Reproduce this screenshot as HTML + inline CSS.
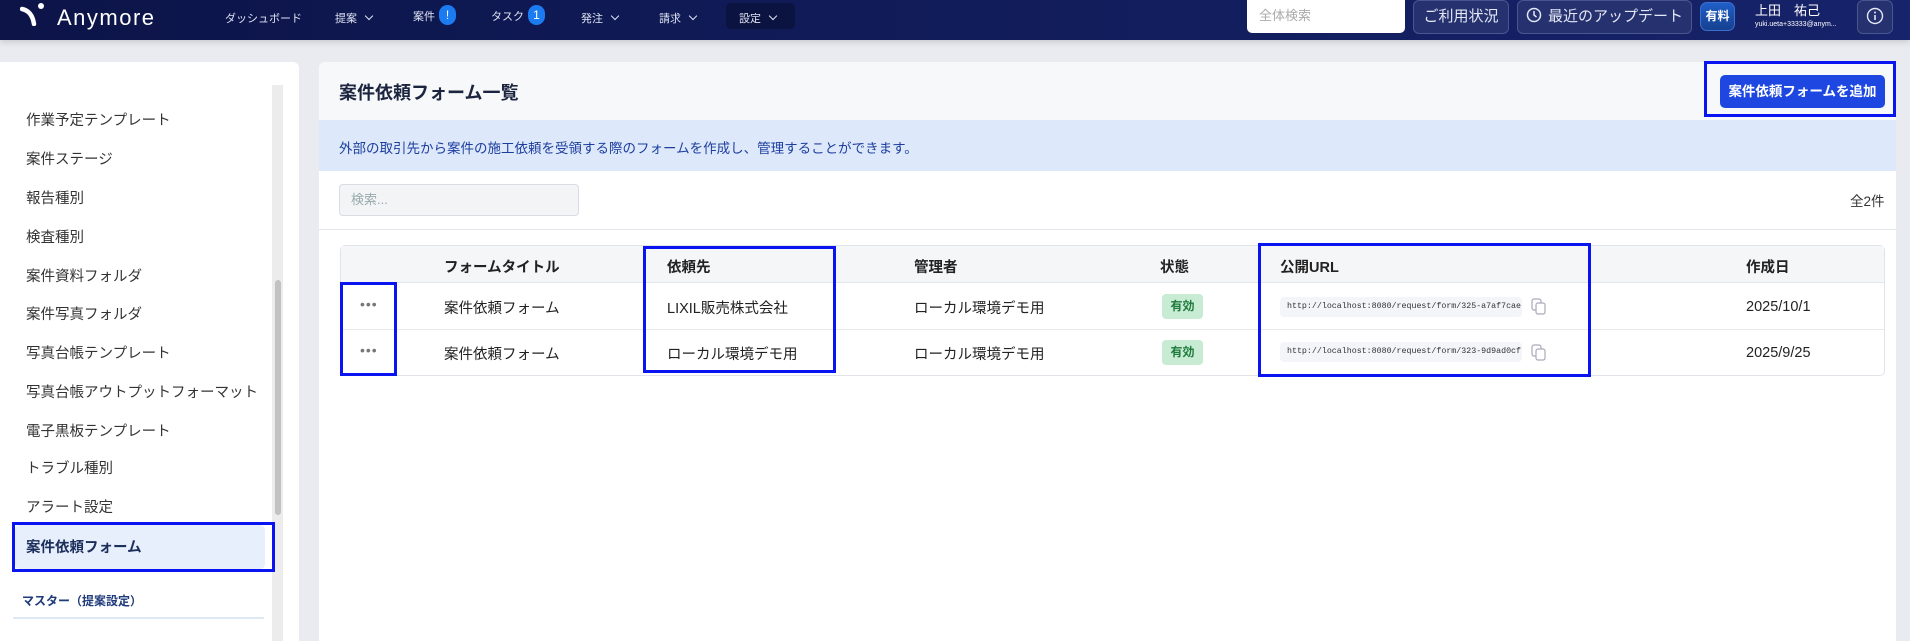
<!DOCTYPE html>
<html><head><meta charset="utf-8"><style>
*{box-sizing:border-box;margin:0;padding:0}
html{width:1910px;height:641px;overflow:hidden}
body{width:1910px;height:641px;overflow:hidden;background:#e9ebf0;font-family:"Liberation Sans","Noto Sans CJK JP",sans-serif;color:#222;position:relative}
.hd{position:absolute;left:0;top:0;width:1910px;height:40px;background:linear-gradient(90deg,#0c1448,#111c5a 50%,#17236a);box-shadow:0 2px 6px rgba(0,0,0,.15)}
.a{position:absolute;white-space:nowrap}
.nav{color:#dfe3f3;font-size:11px;top:10px}
.chev{display:inline-block;width:6px;height:6px;border-right:1.3px solid #dfe3f3;border-bottom:1.3px solid #dfe3f3;transform:rotate(45deg);margin-left:9px;position:relative;top:-3px}
.badge{display:inline-block;width:17px;height:20px;border-radius:10px;background:#1b7bf0;color:#fff;font-size:12px;text-align:center;line-height:20px;margin-left:4px;vertical-align:middle;position:relative;top:-2px}
.hbtn{position:absolute;top:0;height:34px;border:1px solid #4a5690;border-radius:6px;background:#26326f;color:#e4e7f4;font-size:15px;line-height:32px;text-align:center;white-space:nowrap}
.side{position:absolute;left:0;top:62px;width:299px;height:579px;background:#fff;border-radius:0 6px 0 0}
.si{position:absolute;left:26px;font-size:14.5px;color:#333;white-space:nowrap}
.main{position:absolute;left:319px;top:62px;width:1577px;height:579px;background:#fff;border-radius:6px 6px 0 0}
.bl{position:absolute;border:3px solid #0a14f0}
.th{position:absolute;font-size:14.5px;font-weight:bold;color:#222;top:256px;white-space:nowrap}
.td{position:absolute;font-size:14.5px;color:#222;white-space:nowrap}
.pill{position:absolute;left:1280px;width:242px;height:20px;background:#f3f5f8;border-radius:4px;font-family:"Liberation Mono",monospace;font-size:8.3px;color:#333;line-height:20px;padding-left:7px;white-space:nowrap;overflow:hidden}
.ok{position:absolute;left:1162px;width:41px;height:25px;background:#c8ebd3;color:#1e7a3c;font-size:12px;font-weight:bold;border-radius:4px;text-align:center;line-height:25px}
.dots{position:absolute;left:360px;font-size:14px;color:#777;letter-spacing:1px}
</style></head><body>
<div class="hd"></div>
<svg class="a" style="left:20px;top:2px" width="26" height="24" viewBox="0 0 26 24"><path d="M2 7 Q12 9 14 22" stroke="#fff" stroke-width="4.5" fill="none" stroke-linecap="round"/><circle cx="21" cy="4" r="3" fill="#fff"/></svg>
<div class="a" style="left:57px;top:5px;color:#fff;font-size:22px;letter-spacing:1.5px">Anymore</div>
<div class="a nav" style="left:225px">ダッシュボード</div>
<div class="a nav" style="left:335px">提案<span class="chev"></span></div>
<div class="a nav" style="left:413px;top:7px">案件<span class="badge">!</span></div>
<div class="a nav" style="left:491px;top:7px">タスク<span class="badge">1</span></div>
<div class="a nav" style="left:581px">発注<span class="chev"></span></div>
<div class="a nav" style="left:659px">請求<span class="chev"></span></div>
<div class="a" style="left:726px;top:3px;width:69px;height:26px;background:#0b1340;border-radius:5px"></div>
<div class="a nav" style="left:739px">設定<span class="chev"></span></div>
<div class="a" style="left:1247px;top:0;width:158px;height:33px;background:#fff;border-radius:0 0 5px 5px;color:#aaa;font-size:13px;line-height:31px;padding-left:12px">全体検索</div>
<div class="hbtn" style="left:1413px;width:96px">ご利用状況</div>
<div class="hbtn" style="left:1517px;width:175px"><svg width="16" height="16" viewBox="0 0 16 16" style="vertical-align:-2px;margin-right:6px"><circle cx="8" cy="8" r="6.5" stroke="#e4e7f4" stroke-width="1.5" fill="none"/><path d="M8 4v4l2.5 2" stroke="#e4e7f4" stroke-width="1.5" fill="none"/></svg>最近のアップデート</div>
<div class="a" style="left:1700px;top:2px;width:35px;height:29px;background:linear-gradient(#1f5fc8,#16408f);border:1px solid #3c6fd0;border-radius:7px;color:#fff;font-size:12px;font-weight:bold;text-align:center;line-height:27px">有料</div>
<div class="a" style="left:1755px;top:0;color:#fff;font-size:13px">上田　祐己</div>
<div class="a" style="left:1755px;top:21px;color:#fff;font-size:7px">yuki.ueta+33333@anym...</div>
<div class="hbtn" style="left:1857px;width:36px"><svg width="18" height="18" viewBox="0 0 18 18" style="vertical-align:-4px"><circle cx="9" cy="9" r="7.5" stroke="#e4e7f4" stroke-width="1.4" fill="none"/><path d="M9 8v5" stroke="#e4e7f4" stroke-width="1.6"/><circle cx="9" cy="5.5" r="1" fill="#e4e7f4"/></svg></div>

<div class="side"></div>
<div class="a" style="left:272px;top:85px;width:11px;height:556px;background:#ececec"></div>
<div class="a" style="left:275px;top:280px;width:6px;height:235px;background:#c2c2c2;border-radius:3px"></div>
<div class="si" style="top:109px">作業予定テンプレート</div>
<div class="si" style="top:148px">案件ステージ</div>
<div class="si" style="top:187px">報告種別</div>
<div class="si" style="top:226px">検査種別</div>
<div class="si" style="top:265px">案件資料フォルダ</div>
<div class="si" style="top:303px">案件写真フォルダ</div>
<div class="si" style="top:342px">写真台帳テンプレート</div>
<div class="si" style="top:381px">写真台帳アウトプットフォーマット</div>
<div class="si" style="top:420px">電子黒板テンプレート</div>
<div class="si" style="top:457px">トラブル種別</div>
<div class="si" style="top:496px">アラート設定</div>
<div class="a" style="left:15px;top:525px;width:250px;height:44px;background:#e6effb;border-radius:5px"></div>
<div class="si" style="top:536px;font-weight:bold;color:#1c2e5c">案件依頼フォーム</div>
<div class="bl" style="left:12px;top:522px;width:263px;height:50px"></div>
<div class="a" style="left:22px;top:592px;font-size:12px;font-weight:bold;color:#1e3a7a">マスター（提案設定）</div>
<div class="a" style="left:13px;top:617px;width:251px;height:2px;background:#dfe8f5"></div>

<div class="main"></div>
<div class="a" style="left:319px;top:62px;width:1577px;height:58px;background:#f7f8fa;border-radius:6px 6px 0 0"></div>
<div class="a" style="left:339px;top:79px;font-size:18px;font-weight:bold;color:#1c2540">案件依頼フォーム一覧</div>
<div class="a" style="left:1720px;top:75px;width:165px;height:33px;background:#1d47e0;border-radius:5px;color:#fff;font-size:13.5px;font-weight:bold;text-align:center;line-height:33px">案件依頼フォームを追加</div>
<div class="bl" style="left:1704px;top:61px;width:192px;height:56px"></div>
<div class="a" style="left:319px;top:120px;width:1577px;height:51px;background:#dde9fb"></div>
<div class="a" style="left:339px;top:137px;font-size:13.5px;color:#1d3e9e">外部の取引先から案件の施工依頼を受領する際のフォームを作成し、管理することができます。</div>
<div class="a" style="left:339px;top:184px;width:240px;height:32px;background:#f3f4f6;border:1px solid #d9dce2;border-radius:4px;color:#9aa;font-size:13px;line-height:30px;padding-left:11px">検索...</div>
<div class="a" style="left:1850px;top:190px;font-size:13.5px;color:#333">全2件</div>
<div class="a" style="left:319px;top:229px;width:1577px;height:1px;background:#e2e5ea"></div>

<div class="a" style="left:340px;top:245px;width:1545px;height:131px;border:1px solid #e0e3e8;border-radius:5px"></div>
<div class="a" style="left:341px;top:246px;width:1543px;height:37px;background:#f5f6f8;border-bottom:1px solid #e3e6ea"></div>
<div class="a" style="left:341px;top:329px;width:1543px;height:1px;background:#e8eaee"></div>
<div class="th" style="left:444px">フォームタイトル</div>
<div class="th" style="left:667px">依頼先</div>
<div class="th" style="left:914px">管理者</div>
<div class="th" style="left:1160px">状態</div>
<div class="th" style="left:1280px">公開URL</div>
<div class="th" style="left:1746px">作成日</div>

<div class="dots" style="top:296px">•••</div>
<div class="td" style="top:297px;left:444px">案件依頼フォーム</div>
<div class="td" style="top:297px;left:667px">LIXIL販売株式会社</div>
<div class="td" style="top:297px;left:914px">ローカル環境デモ用</div>
<div class="ok" style="top:294px">有効</div>
<div class="pill" style="top:297px">http://localhost:8080/request/form/325-a7af7cae</div>
<div class="td" style="top:299px;left:1746px">2025/10/1</div>

<div class="dots" style="top:342px">•••</div>
<div class="td" style="top:343px;left:444px">案件依頼フォーム</div>
<div class="td" style="top:343px;left:667px">ローカル環境デモ用</div>
<div class="td" style="top:343px;left:914px">ローカル環境デモ用</div>
<div class="ok" style="top:340px">有効</div>
<div class="pill" style="top:342px">http://localhost:8080/request/form/323-9d9ad0cf</div>
<div class="td" style="top:345px;left:1746px">2025/9/25</div>

<svg class="a" style="left:1531px;top:298px" width="16" height="17" viewBox="0 0 16 17"><rect x="1" y="1" width="9" height="11" rx="2" stroke="#aab" fill="none" stroke-width="1.2"/><rect x="5" y="5" width="9" height="11" rx="2" stroke="#aab" fill="#fff" stroke-width="1.2"/></svg>
<svg class="a" style="left:1531px;top:344px" width="16" height="17" viewBox="0 0 16 17"><rect x="1" y="1" width="9" height="11" rx="2" stroke="#aab" fill="none" stroke-width="1.2"/><rect x="5" y="5" width="9" height="11" rx="2" stroke="#aab" fill="#fff" stroke-width="1.2"/></svg>

<div class="bl" style="left:340px;top:282px;width:57px;height:94px"></div>
<div class="bl" style="left:643px;top:246px;width:193px;height:127px"></div>
<div class="bl" style="left:1258px;top:243px;width:333px;height:134px"></div>
</body></html>
